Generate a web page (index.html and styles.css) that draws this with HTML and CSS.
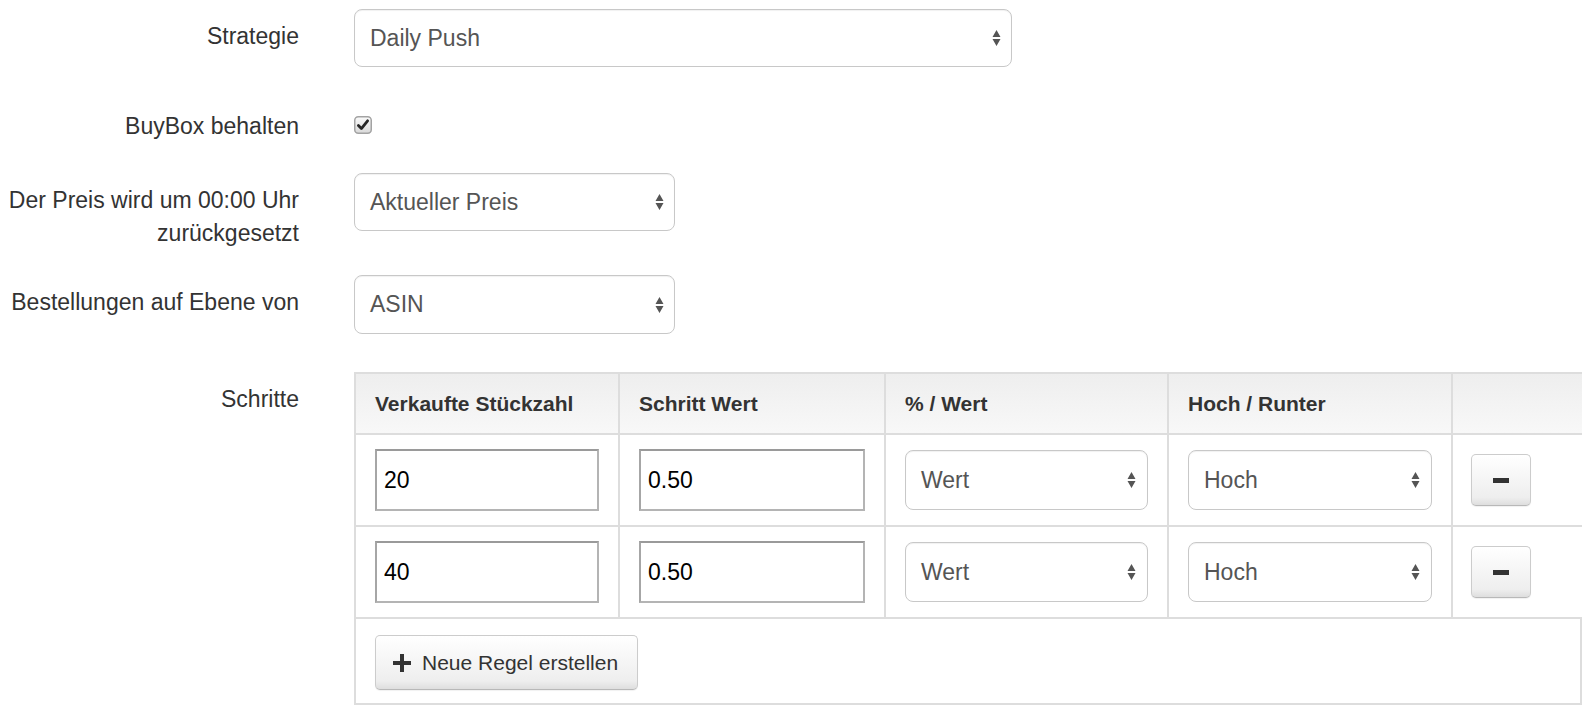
FILE: index.html
```html
<!DOCTYPE html>
<html lang="de">
<head>
  <meta charset="UTF-8">
  <title>Strategie bearbeiten</title>
  <link rel="stylesheet" href="styles.css">
</head>
<body>
  <form class="form">
    <div class="form-row">
      <label class="form-label">Strategie</label>
      <div class="select select-wide">
        <span>Daily Push</span>
        <svg class="arrows" width="9" height="18" viewBox="0 0 9 18"><path d="M4.5 1 8.5 8H.5Z M4.5 17 8.5 10H.5Z"/></svg>
      </div>
    </div>

    <div class="form-row form-row-check">
      <label class="form-label">BuyBox behalten</label>
      <div class="check">
        <svg width="18" height="18" viewBox="0 0 18 18">
          <defs>
            <linearGradient id="cbg" x1="0" y1="0" x2="0" y2="1">
              <stop offset="0" stop-color="#fbfbfb"/>
              <stop offset="1" stop-color="#d9d9d9"/>
            </linearGradient>
          </defs>
          <rect x=".75" y=".75" width="16.5" height="16.5" rx="3.5" fill="url(#cbg)" stroke="#a3a3a3" stroke-width="1.5"/>
          <path d="M4.4 9.6 7.4 12.6 13.6 4.8" fill="none" stroke="#262626" stroke-width="2.8" stroke-linecap="round" stroke-linejoin="round"/>
        </svg>
      </div>
    </div>

    <div class="form-row form-row-tall">
      <label class="form-label">Der Preis wird um 00:00 Uhr zurückgesetzt</label>
      <div class="select select-medium">
        <span>Aktueller Preis</span>
        <svg class="arrows" width="9" height="18" viewBox="0 0 9 18"><path d="M4.5 1 8.5 8H.5Z M4.5 17 8.5 10H.5Z"/></svg>
      </div>
    </div>

    <div class="form-row form-row-last">
      <label class="form-label">Bestellungen auf Ebene von</label>
      <div class="select select-medium select-high">
        <span>ASIN</span>
        <svg class="arrows" width="9" height="18" viewBox="0 0 9 18"><path d="M4.5 1 8.5 8H.5Z M4.5 17 8.5 10H.5Z"/></svg>
      </div>
    </div>

    <div class="form-row">
      <label class="form-label">Schritte</label>
      <table class="steps">
        <colgroup>
          <col style="width:264px">
          <col style="width:266px">
          <col style="width:283px">
          <col style="width:284px">
          <col style="width:131px">
        </colgroup>
        <thead>
          <tr>
            <th>Verkaufte Stückzahl</th>
            <th>Schritt Wert</th>
            <th>% / Wert</th>
            <th>Hoch / Runter</th>
            <th></th>
          </tr>
        </thead>
        <tbody>
          <tr>
            <td><input class="num-input" type="text" value="20"></td>
            <td><input class="num-input" type="text" value="0.50"></td>
            <td>
              <div class="select select-cell">
                <span>Wert</span>
                <svg class="arrows" width="9" height="18" viewBox="0 0 9 18"><path d="M4.5 1 8.5 8H.5Z M4.5 17 8.5 10H.5Z"/></svg>
              </div>
            </td>
            <td>
              <div class="select select-cell">
                <span>Hoch</span>
                <svg class="arrows" width="9" height="18" viewBox="0 0 9 18"><path d="M4.5 1 8.5 8H.5Z M4.5 17 8.5 10H.5Z"/></svg>
              </div>
            </td>
            <td><button type="button" class="btn btn-remove"><span class="minus"></span></button></td>
          </tr>
          <tr>
            <td><input class="num-input" type="text" value="40"></td>
            <td><input class="num-input" type="text" value="0.50"></td>
            <td>
              <div class="select select-cell">
                <span>Wert</span>
                <svg class="arrows" width="9" height="18" viewBox="0 0 9 18"><path d="M4.5 1 8.5 8H.5Z M4.5 17 8.5 10H.5Z"/></svg>
              </div>
            </td>
            <td>
              <div class="select select-cell">
                <span>Hoch</span>
                <svg class="arrows" width="9" height="18" viewBox="0 0 9 18"><path d="M4.5 1 8.5 8H.5Z M4.5 17 8.5 10H.5Z"/></svg>
              </div>
            </td>
            <td><button type="button" class="btn btn-remove"><span class="minus"></span></button></td>
          </tr>
          <tr class="steps-foot">
            <td colspan="5">
              <button type="button" class="btn btn-add">
                <svg width="18" height="18" viewBox="0 0 18 18"><path d="M7 0h4v7h7v4h-7v7H7v-7H0V7h7Z"/></svg>
                Neue Regel erstellen
              </button>
            </td>
          </tr>
        </tbody>
      </table>
    </div>
  </form>
</body>
</html>
```

FILE: styles.css
```css
body {
  margin: 0;
  padding-top: 9px;
  font-family: "Liberation Sans", Arial, sans-serif;
  font-size: 23px;
  color: #333;
  background: #fff;
}
.form-row {
  display: grid;
  grid-template-columns: 299px 1fr;
  column-gap: 55px;
  align-items: start;
  margin-bottom: 32px;
}
.form-row-check {
  margin-bottom: 30px;
}
.form-row-tall {
  margin-bottom: 25px;
}
.form-row-last {
  margin-bottom: 38px;
}
.form-label {
  text-align: right;
  line-height: 33px;
  padding-top: 11px;
}
.check {
  padding-top: 17px;
  line-height: 0;
}
.select {
  display: flex;
  align-items: center;
  justify-content: space-between;
  box-sizing: border-box;
  height: 58px;
  padding: 0 10px 0 15px;
  border: 1.5px solid #c8c8c8;
  border-radius: 8px;
  background: #fff;
  color: #555;
  box-shadow: inset 0 1px 1px rgba(0, 0, 0, .06);
}
.select-wide {
  width: 658px;
}
.select-medium {
  width: 321px;
}
.select-high {
  height: 59px;
}
.select-cell {
  width: 100%;
  height: 60px;
  padding-right: 11px;
}
.arrows {
  flex-shrink: 0;
  fill: #555;
}
.steps {
  border-collapse: separate;
  border-spacing: 0;
  table-layout: fixed;
  width: 1228px;
}
.steps th,
.steps td {
  border-left: 2px solid #dddddd;
  border-bottom: 2px solid #dddddd;
  padding: 14px 19px;
  text-align: left;
  vertical-align: middle;
}
.steps th {
  padding-top: 15px;
  padding-bottom: 15px;
  border-top: 2px solid #dddddd;
  background: linear-gradient(#eeeeee, #f8f8f8);
  font-size: 21px;
  line-height: 29px;
  font-weight: bold;
  color: #333;
}
.steps td:last-child {
  padding-left: 18px;
}
.num-input {
  display: block;
  box-sizing: border-box;
  width: 100%;
  height: 62px;
  margin: 0;
  padding: 0 7px;
  border: 2px solid #b4b4b4;
  border-top-color: #9a9a9a;
  border-left-color: #a6a6a6;
  border-radius: 0;
  font-family: "Liberation Sans", Arial, sans-serif;
  font-size: 23px;
  color: #000;
  background: #fff;
}
.steps-foot td {
  border-right: 2px solid #dddddd;
  padding: 16px 19px 13px;
}
.steps-foot td:last-child {
  padding-left: 19px;
}
.btn {
  display: inline-flex;
  align-items: center;
  box-sizing: border-box;
  margin: 0;
  border: 1px solid #cccccc;
  border-bottom-color: #b8b8b8;
  border-radius: 5px;
  background: linear-gradient(#ffffff, #eeeeee 85%, #dedede);
  box-shadow: 0 1px 1px rgba(0, 0, 0, .06);
  font-family: "Liberation Sans", Arial, sans-serif;
  font-size: 21px;
  color: #333;
  cursor: pointer;
}
.btn-remove {
  justify-content: center;
  width: 60px;
  height: 52px;
  padding: 0;
}
.minus {
  display: block;
  width: 16px;
  height: 5px;
  background: #333;
}
.btn-add {
  gap: 11px;
  height: 55px;
  padding: 0 19px 0 17px;
}
.btn-add svg {
  fill: #333;
}
```
